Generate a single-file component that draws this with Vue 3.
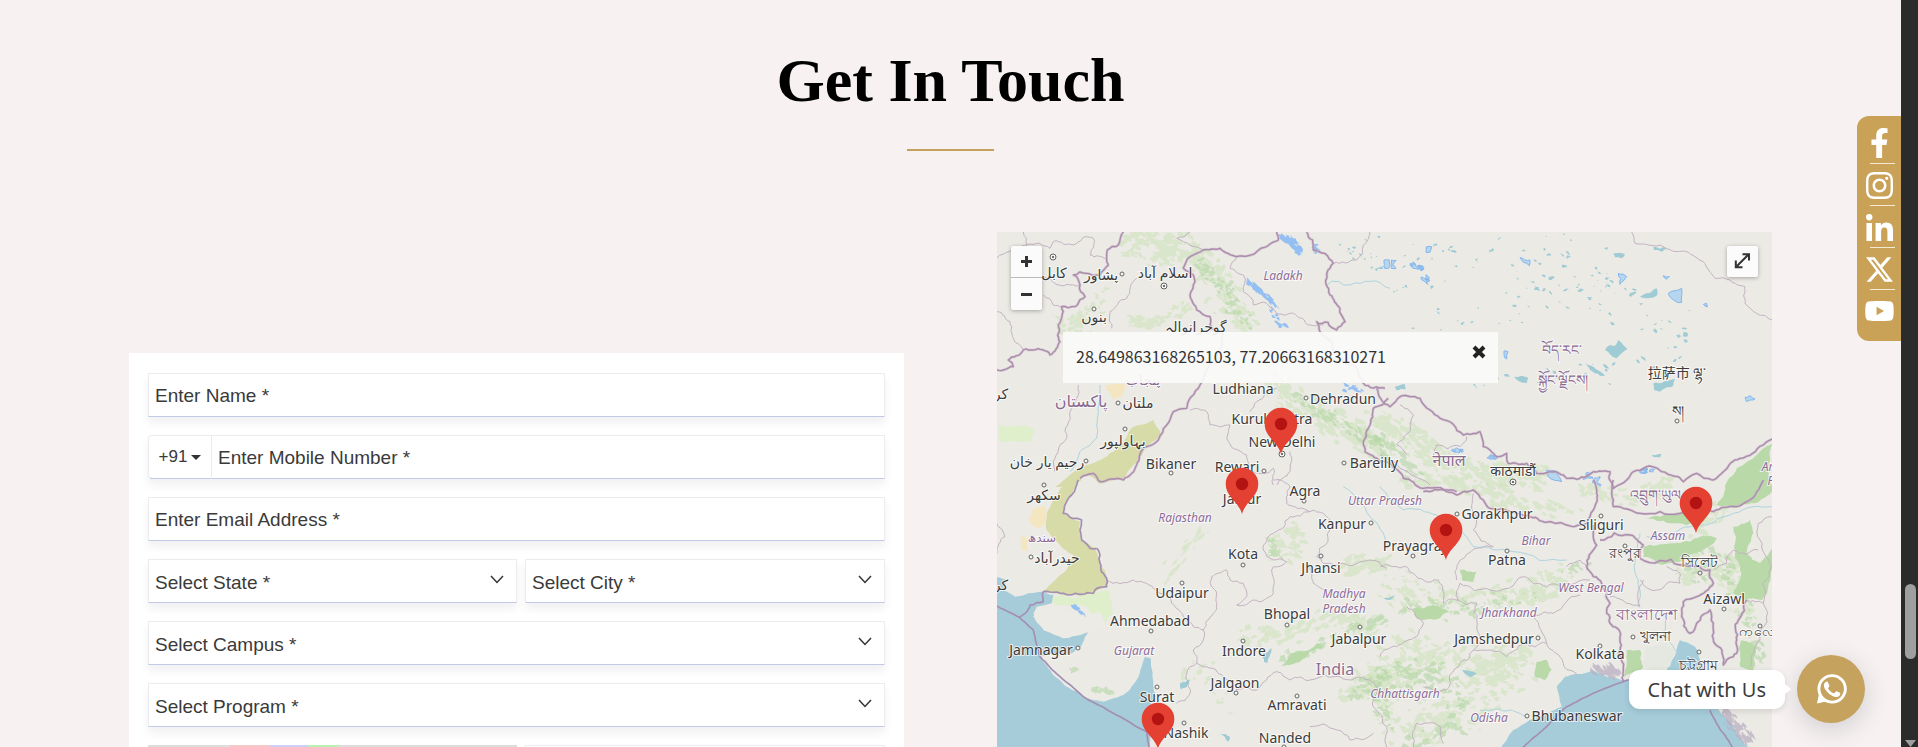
<script setup>
import { ref } from 'vue'

const selects = [
  { id: 'state', label: 'Select State *', half: true },
  { id: 'city', label: 'Select City *', half: true },
  { id: 'campus', label: 'Select Campus *' },
  { id: 'program', label: 'Select Program *' },
]

const socials = [
  { name: 'Facebook', box: '0 0 320 512', w: 19, h: 30, d: 'M279.14 288l14.22-92.66h-88.91v-60.13c0-25.35 12.42-50.06 52.24-50.06h40.42V6.26S260.43 0 225.36 0c-73.22 0-121.08 44.38-121.08 124.72v70.62H22.89V288h81.39v224h100.17V288z' },
  { name: 'Instagram', box: '0 32 448 448', w: 27, h: 27, d: 'M224.1 141c-63.6 0-114.9 51.3-114.9 114.9s51.3 114.9 114.9 114.9S339 319.5 339 255.9 287.7 141 224.1 141zm0 189.6c-41.1 0-74.7-33.5-74.7-74.7s33.5-74.7 74.7-74.7 74.7 33.5 74.7 74.7-33.6 74.7-74.7 74.7zm146.4-194.3c0 14.9-12 26.8-26.8 26.8-14.9 0-26.8-12-26.8-26.8s12-26.8 26.8-26.8 26.8 12 26.8 26.8zm76.1 27.2c-1.7-35.9-9.9-67.7-36.2-93.9-26.2-26.2-58-34.4-93.9-36.2-37-2.1-147.9-2.1-184.9 0-35.8 1.7-67.6 9.9-93.9 36.1s-34.4 58-36.2 93.9c-2.1 37-2.1 147.9 0 184.9 1.7 35.9 9.9 67.7 36.2 93.9s58 34.4 93.9 36.2c37 2.1 147.9 2.1 184.9 0 35.9-1.7 67.7-9.9 93.9-36.2 26.2-26.2 34.4-58 36.2-93.9 2.1-37 2.1-147.8 0-184.8zM398.8 388c-7.8 19.6-22.9 34.7-42.6 42.6-29.5 11.7-99.5 9-132.1 9s-102.7 2.6-132.1-9c-19.6-7.8-34.7-22.9-42.6-42.6-11.7-29.5-9-99.5-9-132.1s-2.6-102.7 9-132.1c7.8-19.6 22.9-34.7 42.6-42.6 29.5-11.7 99.5-9 132.1-9s102.7-2.6 132.1 9c19.6 7.8 34.7 22.9 42.6 42.6 11.7 29.5 9 99.5 9 132.1s2.7 102.7-9 132.1z' },
  { name: 'LinkedIn', box: '0 0 448 448', w: 27, h: 27, d: 'M100.28 448H7.4V148.9h92.88zM53.79 108.1C24.09 108.1 0 83.5 0 53.8a53.79 53.79 0 0 1 107.58 0c0 29.7-24.1 54.3-53.79 54.3zM447.9 448h-92.68V302.4c0-34.7-.7-79.2-48.29-79.2-48.29 0-55.69 37.7-55.69 76.7V448h-92.78V148.9h89.08v40.8h1.3c12.4-23.5 42.69-48.3 87.88-48.3 94 0 111.28 61.9 111.28 142.3V448z' },
  { name: 'X', box: '26 48 462 416', w: 27, h: 25, d: 'M389.2 48h70.6L305.6 224.2 487 464H345L233.7 318.6 106.5 464H35.8L200.7 275.5 26.8 48H172.4L272.9 180.9 389.2 48zM364.4 421.8h39.1L151.1 88h-42L364.4 421.8z' },
  { name: 'YouTube', box: '14 64 548 384', w: 29, h: 20, d: 'M549.655 124.083c-6.281-23.65-24.787-42.276-48.284-48.597C458.781 64 288 64 288 64S117.22 64 74.629 75.486c-23.497 6.322-42.003 24.947-48.284 48.597-11.412 42.867-11.412 132.305-11.412 132.305s0 89.438 11.412 132.305c6.281 23.65 24.787 41.5 48.284 47.821C117.22 448 288 448 288 448s170.78 0 213.371-11.486c23.497-6.321 42.003-24.171 48.284-47.821 11.412-42.867 11.412-132.305 11.412-132.305s0-89.438-11.412-132.305zm-317.51 213.508V175.185l142.739 81.205-142.739 81.201z' },
]

/* Terrain is described on a grid of thirds, split in four quadrants. */
const origin = { nw: [-21, -21], ne: [1149, -21], sw: [-21, 744], se: [1149, 744] }

let seed = 7
function rnd() {
  seed = (seed * 16807) % 2147483647
  return seed / 2147483647
}
function parse(q, s) {
  return s.split(' ').map((p) => {
    const [x, y] = p.split(',').map(Number)
    return [x + origin[q][0], y + origin[q][1]]
  })
}
/* Splits every leg of a line and pushes the new points sideways. */
function rough(pts, amp, closed) {
  let line = closed ? [...pts, pts[0]] : pts
  for (let k = 0; k < 3; k++) {
    const next = [line[0]]
    for (let i = 1; i < line.length; i++) {
      const [ax, ay] = line[i - 1]
      const [bx, by] = line[i]
      const len = Math.hypot(bx - ax, by - ay)
      if (len > 12) {
        const off = (rnd() - 0.5) * len * amp
        next.push([(ax + bx) / 2 - ((by - ay) / len) * off, (ay + by) / 2 + ((bx - ax) / len) * off])
      }
      next.push(line[i])
    }
    line = next
  }
  return 'M' + line.map(([x, y]) => x.toFixed(0) + ' ' + y.toFixed(0)).join('L') + (closed ? 'Z' : '')
}
const line = (q, s, amp = 0.35) => rough(parse(q, s), amp, false)
const area = (q, s, amp = 0.25) => rough(parse(q, s), amp, true)

/* Small irregular patches strewn along a line; `slant` null picks a random lean. */
function scatter(q, s, spread, n, size, slant = null) {
  const pts = parse(q, s)
  let d = ''
  for (let i = 0; i < n; i++) {
    const leg = Math.floor(rnd() * Math.max(1, pts.length - 1))
    const a = pts[leg]
    const b = pts[Math.min(leg + 1, pts.length - 1)]
    const t = rnd()
    const cx = a[0] + (b[0] - a[0]) * t + (rnd() + rnd() - 1) * spread
    const cy = a[1] + (b[1] - a[1]) * t + (rnd() + rnd() - 1) * spread
    const r = size * (0.3 + rnd())
    const lean = slant === null ? rnd() * 1.2 - 0.5 : slant
    const pt = []
    for (let k = 0; k < 10; k++) {
      const ang = (k / 10) * Math.PI * 2
      const rr = r * (0.3 + rnd() * 0.9)
      const x = Math.cos(ang) * rr * 1.2
      pt.push((cx + x).toFixed(0) + ' ' + (cy + Math.sin(ang) * rr * 0.8 + x * lean).toFixed(0))
    }
    d += 'M' + pt.join('L') + 'Z'
  }
  return d
}

const sea = [
  area('sw', '0,290 50,300 40,330 75,350 155,335 190,345 185,370 140,380 130,410 160,450 220,475 295,455 272,500 245,520 190,520 150,530 175,565 230,620 290,655 340,665 400,645 440,600 455,560 465,530 482,535 488,580 495,640 480,680 475,740 500,900 -60,900 -60,290', 0.12),
  area('se', '585,582 640,572 730,600 790,600 860,570 900,480 945,500 970,560 990,620 1010,680 1060,740 1110,810 1110,900 360,900 360,810 400,750 500,700 545,680 530,620 555,590', 0.12),
]
const desert = [
  area('nw', '430,605 490,585 515,630 460,680 430,720 400,760 330,770 290,745 250,785 195,785 290,720 370,680', 0.15),
  area('sw', '230,-5 265,5 225,70 222,100 270,125 275,180 315,205 330,250 352,295 350,322 310,335 240,345 160,333 230,270 250,225 205,190 170,150 170,100 190,60', 0.12),
  area('sw', '315,0 370,0 330,12', 0.1),
]
const sand = [
  area('nw', '345,480 405,478 395,515 370,525'),
  area('sw', '130,85 165,80 165,130 140,145 118,120'),
  area('sw', '90,160 110,175 115,215 95,210'),
]
const marsh = [
  area('sw', '180,350 260,355 355,330 370,400 340,445 310,420 290,380 200,375'),
  area('nw', '25,600 130,610 120,650 25,650'),
]
const forest = [
  area('ne', '1180,650 1130,690 1070,730 1035,785 1010,840 1060,850 1120,835 1180,790'),
  area('se', '790,200 870,190 930,185 960,170 1010,175 960,215 900,245 830,250 790,230'),
  area('se', '1060,140 1110,120 1120,160 1100,220 1140,250 1180,190 1180,260 1145,360 1095,360 1060,340 1080,260'),
  area('se', '1085,480 1130,500 1120,570 1080,560'),
  area('se', '790,115 840,110 980,100 970,125 870,130'),
  area('se', '740,510 780,510 790,560 730,590'),
  area('se', '100,385 160,375 205,395 180,415 110,415'),
  area('se', '470,545 500,540 515,570 495,600 465,590'),
  area('se', '240,270 290,275 280,305 245,300'),
  area('sw', '905,520 980,490 1000,500 930,545 880,555'),
]
const paleWood = [
  scatter('nw', '400,40 480,80 560,60 640,110 700,190 770,300', 60, 190, 12),
  scatter('nw', '420,280 450,295 520,290 600,240', 20, 60, 10, -0.2),
  scatter('nw', '210,290 280,300 330,200', 40, 60, 9),
  scatter('nw', '850,480 960,560 1080,610 1200,680', 50, 190, 13, 0.5),
  scatter('ne', '-30,590 80,630 180,700 320,740 500,770', 50, 200, 13, 0.4),
  scatter('se', '60,0 240,10 400,55 600,100', 35, 110, 12, 0.3),
  scatter('sw', '1050,270 1190,240', 30, 50, 13, -0.3),
  scatter('sw', '760,480 900,450 1050,420 1180,440', 40, 110, 12, -0.4),
  scatter('sw', '1080,640 1190,580 1180,760', 50, 110, 12),
  scatter('se', '20,320 250,380 450,340 560,290', 60, 160, 12),
  scatter('se', '20,580 130,520 300,560 430,530 250,700 80,740', 80, 320, 13),
  scatter('se', '1010,60 900,300 1060,260 1100,420', 50, 120, 13),
  scatter('sw', '640,150 600,200 520,290', 25, 30, 8, -1),
  scatter('sw', '860,180 860,230 930,200 900,140', 30, 60, 11),
  scatter('sw', '560,600 650,560 720,700', 40, 24, 9),
  scatter('se', '870,10 760,60 600,30', 35, 60, 11),
]
const deepWood = [
  scatter('nw', '610,100 690,170 770,290', 30, 90, 8),
  scatter('nw', '900,510 1060,600 1200,680', 22, 90, 9, 0.5),
  scatter('ne', '-10,640 60,690 110,760', 20, 45, 9, 0.5),
  scatter('sw', '870,540 960,510 1100,440 1180,410', 20, 60, 10, -0.5),
  scatter('sw', '1100,650 1170,560 1190,740', 30, 50, 10),
  scatter('sw', '850,190 860,230', 16, 14, 12),
  scatter('se', '20,600 160,560 240,720 100,780', 60, 100, 11),
  scatter('se', '50,390 250,385 480,340', 40, 55, 10),
  scatter('se', '560,280 620,250', 22, 16, 9),
  scatter('se', '930,310 1000,200 1120,420 1130,560', 40, 50, 12),
  scatter('sw', '300,630 360,630', 8, 14, 11),
  scatter('sw', '240,565 265,570', 5, 6, 9),
]
const lakes = [
  scatter('ne', '-40,60 300,100 700,60', 70, 34, 6),
  scatter('ne', '40,200 400,160 700,160', 80, 26, 5),
  scatter('ne', '100,280 400,260 800,230', 70, 24, 5),
  scatter('ne', '500,180 700,200 930,360', 70, 34, 7),
  scatter('ne', '300,480 500,430 700,460 900,380', 50, 24, 6),
  scatter('nw', '1060,60 1180,130', 40, 14, 6),
  area('ne', '675,375 690,360 705,362 715,345 730,360 742,372 725,385 710,400 690,388'),
  area('ne', '820,475 885,462 880,482 855,490 840,500 822,495'),
  area('ne', '402,455 425,452 445,458 440,475 415,468'),
  area('ne', '612,412 640,425 675,452 660,452 630,435'),
  area('ne', '780,215 800,205 830,190 832,210 800,220'),
  area('ne', '700,85 735,88 725,100 705,97'),
  area('ne', '820,65 860,68 845,80 822,75'),
  area('ne', '45,485 75,478 78,492 50,496'),
  area('ne', '815,690 845,688 840,697 820,696'),
  area('sw', '820,520 845,505 840,525 832,550 822,545'),
  area('sw', '570,610 600,598 590,622 572,628'),
  area('sw', '690,762 720,770 715,785'),
  area('se', '245,570 290,580 270,592'),
  area('se', '10,355 45,345 30,360'),
]
const brightLakes = [
  scatter('nw', '870,30 910,50 935,85', 14, 24, 12, 0.7),
  scatter('nw', '770,165 800,190 850,235', 10, 26, 11, 0.9),
  scatter('nw', '835,240 860,280 890,310', 14, 12, 8, 0.5),
  scatter('nw', '960,45 985,80', 14, 6, 7),
  scatter('nw', '1060,485 1120,500', 14, 10, 7),
  scatter('sw', '250,380 280,400', 8, 8, 10, 0.9),
]
const lakeRings = [
  scatter('ne', '80,105 120,120 145,170', 10, 9, 10, 0.5),
  area('ne', '12,105 28,105 26,130 14,130'),
  area('ne', '34,105 48,106 38,120 48,130 34,130'),
  area('ne', '715,145 740,155 720,178'),
  area('ne', '865,205 905,190 905,232 888,230'),
  area('ne', '420,98 450,105 448,122 430,112'),
  area('ne', '140,65 155,65 150,82 138,82'),
  area('ne', '850,152 868,155 858,163'),
  area('ne', '970,238 980,235 982,246'),
  area('ne', '372,378 384,380 380,402 374,398'),
  area('ne', '1095,518 1110,512 1125,522 1100,530'),
  area('ne', '500,735 530,740 545,770 505,755'),
  scatter('ne', '215,680 250,676', 4, 4, 9, 0),
  scatter('ne', '320,690 350,700', 5, 4, 9),
  scatter('ne', '790,735 830,742', 5, 6, 8),
  scatter('ne', '620,750 660,775', 5, 5, 9),
]
const rivers = [
  line('nw', '330,480 325,560 320,640 270,680 240,740', 0.15),
  line('nw', '1200,190 1080,180 1010,180'),
  line('se', '780,160 765,240 775,300 775,380', 0.2),
  line('se', '1175,80 1060,100 980,135 880,160 800,170', 0.2),
  line('se', '0,20 70,90 170,105 280,200 400,215 560,240', 0.2),
  line('se', '850,400 850,460 880,500 890,560', 0.3),
  line('se', '440,710 390,690 300,690', 0.2),
  line('sw', '1060,20 1140,110 1190,190', 0.15),
]
const borders = [
  line('nw', '400,21 385,60 352,75 355,120 330,150 290,145 250,150 270,180 285,215 262,240 215,245 205,300 210,350 180,390 130,375 100,375 55,405 70,425 21,435'),
  line('nw', '860,21 865,45 800,80 740,95 690,70 640,75 600,95 580,130 610,150 615,170 600,210 620,255 660,275 660,300 700,330 680,400 630,480 600,520 590,550 550,560 530,600 500,650 460,670 440,720 400,765 330,770 310,745 270,760', 0.2),
  line('nw', '950,21 970,75 1030,115 1010,160 1020,210 1050,250 1065,290 1040,315 980,290 990,320 1050,400 1120,475 1185,490'),
  line('ne', '-10,490 30,545 60,515 120,520 150,555 180,580 250,630 300,620 310,665 350,695 380,685 385,715 440,715 470,745 510,740 560,760 620,755 640,740 690,740 700,790 740,765 760,740 800,725 860,745 910,770 950,745 1000,765 1030,740 1080,700 1150,660 1185,640', 0.25),
  line('nw', '1195,520 1150,550 1140,600 1120,650 1125,680 1170,710 1200,715 1240,760 1300,790 1400,800', 0.25),
  line('se', '130,35 200,35 230,45 280,30 310,60 330,85 400,95 450,110 510,125 560,135 620,130 640,90 650,40 640,0', 0.25),
  line('se', '700,0 700,80 780,100 900,100 1000,95 1070,80 1110,60 1140,20 1150,0', 0.2),
  line('se', '640,135 640,165 650,195 620,260 640,290 680,340 690,370 680,400 690,430 720,470 715,520 730,590'),
  line('se', '660,180 750,165 790,195 780,235 900,255 990,270 1000,310 950,350 910,365 905,410 930,460 950,430 990,390 1000,430 1015,500 1030,555 1060,530 1070,480 1075,420 1100,360'),
]
const coastLines = [
  line('sw', '320,205 330,250 350,295 350,320 320,325 310,340 240,345 160,335 160,365 120,375 105,400 88,412', 0.25),
  line('sw', '265,0 245,45 225,75 220,100 275,120 275,180 300,205 320,205', 0.2),
  line('sw', '21,378 88,412 130,450 150,530 210,590 280,650 370,700 440,740 470,755 478,810', 0.04),
  line('se', '760,595 730,605 640,640 560,680 500,740 420,810', 0.04),
  line('se', '725,590 730,605', 0.04),
  line('se', '990,690 1010,730 1050,790 1060,810', 0.08),
]
const stateLines = [
  line('nw', '21,100 60,80 110,60 100,21'),
  line('nw', '110,60 180,70 190,50 250,60 310,40 300,90 350,100'),
  line('nw', '21,260 60,290 70,340 100,375'),
  line('nw', '160,210 190,240 215,245'),
  line('nw', '150,140 180,160 240,180 270,180'),
  line('nw', '740,95 720,130 760,150 790,240 830,235 860,265 910,265 960,300 1000,300'),
  line('nw', '1030,115 1100,105 1120,60 1140,21'),
  line('nw', '600,21 560,40 640,75'),
  line('nw', '365,310 360,260 410,220 440,160'),
  line('nw', '600,555 650,560 660,600 720,600 710,640 770,690 790,740 850,730 850,780'),
  line('nw', '265,480 240,560 230,640 195,700 195,740'),
  line('nw', '780,560 800,530 860,490'),
  line('nw', '900,680 900,740 860,780'),
  line('ne', '755,21 765,55 840,60 920,80 970,110 1005,160 1050,165 1095,185 1095,235 1130,265 1180,285', 0.2),
  line('ne', '60,540 100,570 90,620 50,660 80,690'),
  line('ne', '160,690 170,660 240,665 260,635'),
  line('ne', '0,690 60,730 150,780', 0.2),
  line('sw', '350,300 430,300 490,325 545,370 580,410 610,440 640,450 640,480 610,510 620,550 590,580 600,640 560,670'),
  line('sw', '640,450 670,400 680,340 665,290 710,270 720,300 760,310 770,350 740,375 790,360 850,340 850,260 890,245'),
  line('sw', '890,245 820,210 850,160 900,110 960,95 1010,110 1030,140 1010,190 980,230 1000,250 1060,250 1140,240 1190,265'),
  line('sw', '960,260 970,310 1010,340'),
  line('sw', '620,550 650,560 700,590 740,630 800,630 860,575 900,600 960,600 1050,590 1140,600 1160,620 1150,680 1190,740 1190,801'),
  line('sw', '850,0 900,20 890,70 960,95'),
  line('sw', '21,130 45,170 21,220'),
  line('sw', '960,740 1040,750 1080,780 1150,760'),
  line('se', '230,300 235,250 290,205 340,200 280,150 290,110 280,40'),
  line('se', '0,260 80,260 130,300 175,300 190,370 235,360 240,310 330,330 430,290 500,320 560,310 630,300'),
  line('se', '80,380 130,430 110,470 50,500 0,530'),
  line('se', '290,420 280,510 240,550 200,630 130,620'),
  line('se', '290,420 290,370 230,360'),
  line('se', '600,345 520,400 460,410 500,490 550,550 590,580'),
  line('se', '280,510 380,530 430,490 500,490'),
  line('se', '100,801 110,730 180,740 190,790'),
  line('se', '780,300 830,330 900,310 900,280 860,260'),
  line('se', '690,350 740,370 780,380 790,300'),
  line('se', '1100,360 1150,370 1175,260 1140,180 1135,130 1175,110'),
  line('se', '1150,370 1140,480 1110,560'),
  line('se', '1000,270 1060,210 1135,210'),
  line('se', '560,260 600,240 620,270'),
]
const delta = [
  scatter('se', '650,570 715,575', 16, 50, 9, 1),
  scatter('se', '1030,690 1110,790', 22, 70, 9, 1),
]
const deltaIsland = area('se', '800,500 860,490 885,520 870,560 830,575 790,560')
const kutch = area('sw', '130,400 150,380 200,387 250,388 280,405 330,395 350,440 290,458 220,475 160,450', 0.12)

/* [text, x, baseline, kind] in map pixels */
const labels = [
  ['کابل', 57, 46], ['پشاور', 104, 48], ['اسلام آباد', 168, 46], ['بنوں', 97, 90], ['گوجرانوالہ', 199, 100],
  ['پنجاب', 146, 153, 'country small'], ['کر', 4, 167], ['پاکستان', 84, 175, 'country'], ['ملتان', 141, 176],
  ['بہاولپور', 126, 214], ['رحیم یار خان', 50, 235], ['سکھر', 47, 268], ['سندھ', 45, 310, 'region upright'],
  ['حیدرآباد', 60, 331], ['کر', 4, 358],
  ['Ladakh', 286, 48, 'region'], ['Ludhiana', 246, 162], ['Dehradun', 346, 172], ['Kurukshetra', 275, 192],
  ['New Delhi', 285, 215], ['Bikaner', 174, 237], ['Rewari', 240, 240], ['Bareilly', 377, 236],
  ['བོད་རང་', 565, 123, 'country small'], ['སྐྱོང་ལྗོངས།', 566, 153, 'country small'],
  ['拉萨市 ལྷ་', 680, 146], ['ས།', 681, 184],
  ['नेपाल', 452, 234, 'country'], ['काठमाडौं', 516, 244],
  ['Arunachal', 792, 239, 'region'], ['Pradesh', 792, 253, 'region'],
  ['Jaipur', 245, 272], ['Agra', 308, 264], ['Rajasthan', 188, 290, 'region'], ['Uttar Pradesh', 388, 273, 'region'],
  ['Kanpur', 345, 297], ['Kota', 246, 327], ['Prayagraj', 417, 319], ['Jhansi', 324, 341], ['Udaipur', 185, 366],
  ['Madhya', 347, 366, 'region'], ['Pradesh', 347, 381, 'region'], ['Bhopal', 290, 387], ['Ahmedabad', 153, 394],
  ['Jamnagar', 44, 423], ['Gujarat', 137, 423, 'region'], ['Indore', 247, 424], ['Jabalpur', 362, 412],
  ['India', 338, 443, 'country'], ['Jalgaon', 238, 456], ['Surat', 160, 470], ['Amravati', 300, 478],
  ['Chhattisgarh', 408, 466, 'region'], ['Nashik', 189, 506], ['Nanded', 288, 511],
  ['Gorakhpur', 500, 287], ['Bihar', 539, 313, 'region'], ['Patna', 510, 333], ['Siliguri', 604, 298],
  ['འབྲུག་ཡུལ', 658, 268, 'country small'], ['Assam', 671, 308, 'region'], ['রংপুর', 628, 326], ['সিলেট', 702, 335],
  ['West Bengal', 594, 360, 'region'], ['Aizawl', 727, 372], ['Jharkhand', 512, 385, 'region'],
  ['বাংলাদেশ', 649, 388, 'country'], ['Jamshedpur', 497, 412], ['খুলনা', 658, 409], ['Kolkata', 603, 427],
  ['ကလေး', 762, 404], ['চট্টগ্রাম', 701, 438], ['Bhubaneswar', 580, 489], ['Odisha', 492, 490, 'region'],
]
const towns = [
  [125, 42], [97, 77], [121, 171], [309, 166], [128, 197], [89, 229], [174, 241], [267, 239], [347, 231], [680, 189],
  [47, 253], [34, 325], [307, 269], [374, 291], [246, 333], [416, 324], [324, 324], [185, 351], [290, 393], [154, 399],
  [81, 416], [246, 409], [363, 395], [239, 461], [160, 455], [300, 464], [187, 491], [287, 515], [460, 282], [510, 319],
  [604, 284], [628, 314], [703, 341], [727, 377], [541, 406], [636, 405], [603, 414], [763, 394], [702, 420], [530, 484],
]
const capitals = [[56, 25], [167, 54], [285, 222], [516, 250]]
const pins = [[284, 222], [245, 282], [161, 517], [449, 328], [699, 301]]

const showPopup = ref(true)
</script>

<template>
  <div class="shell">
    <main class="page">
      <h1 class="title">Get In Touch</h1>
      <div class="rule"></div>

      <div class="columns">
        <form class="card" @submit.prevent>
          <div class="row">
            <input class="field" type="text" placeholder="Enter Name *" aria-label="Name" />
          </div>
          <div class="row phone">
            <button type="button" class="code" aria-label="Country code +91">+91<span class="caret"></span></button>
            <input class="field" type="tel" placeholder="Enter Mobile Number *" aria-label="Mobile number" />
          </div>
          <div class="row">
            <input class="field" type="email" placeholder="Enter Email Address *" aria-label="Email address" />
          </div>
          <div v-for="s in selects" :key="s.id" class="row" :class="{ half: s.half }">
            <select :id="s.id" class="field" :aria-label="s.label"><option>{{ s.label }}</option></select>
            <svg class="chevron" viewBox="0 0 14 9" aria-hidden="true"><path d="M1 1l6 6.500L13 1" /></svg>
          </div>
          <div class="captcha" aria-hidden="true"><i></i></div>
          <div class="row half">
            <input class="field" type="text" aria-label="Captcha" />
          </div>
        </form>

        <section class="map" aria-label="Campus map">
          <svg class="tiles" viewBox="0 0 775 515" preserveAspectRatio="xMinYMin slice">
            <rect width="775" height="515" fill="#ebeae5" />
            <g transform="scale(0.33333)">
              <path v-for="d in marsh" :key="d" :d="d" fill="#dfefcb" />
              <path v-for="d in paleWood" :key="d" :d="d" fill="#cfe3bd" opacity="0.65" />
              <path v-for="d in deepWood" :key="d" :d="d" fill="#b2d6a3" opacity="0.6" />
              <path v-for="d in forest" :key="d" :d="d" fill="#b9d9a9" />
              <path v-for="d in desert" :key="d" :d="d" fill="#d7dba7" />
              <path v-for="d in sand" :key="d" :d="d" fill="#f3e6c0" />
              <path v-for="d in sea" :key="d" :d="d" fill="#a6ccd9" />
              <path :d="kutch" fill="#ecebe5" />
              <path :d="deltaIsland" fill="#e4e8e0" />
              <path v-for="d in delta" :key="d" :d="d" fill="#b9aec0" opacity="0.75" />
              <path v-for="d in lakes" :key="d" :d="d" fill="#9fcbd5" />
              <path v-for="d in brightLakes" :key="d" :d="d" fill="#94bff3" />
              <g fill="#b5d6ee" stroke="#84b6ee" stroke-width="3"><path v-for="d in lakeRings" :key="d" :d="d" /></g>
              <g class="ln" stroke="#acd3de" stroke-width="3"><path v-for="d in rivers" :key="d" :d="d" /></g>
              <g class="ln" stroke="#c3b3c2" stroke-width="3"><path v-for="d in stateLines" :key="d" :d="d" /></g>
              <g class="ln" stroke="#c9b3ca" stroke-width="8" opacity="0.6"><path v-for="d in borders" :key="d" :d="d" /></g>
              <g class="ln" stroke="#ab8cab" stroke-width="4"><path v-for="d in borders" :key="d" :d="d" /></g>
              <g class="ln" stroke="#a48fb3" stroke-width="5"><path v-for="d in coastLines" :key="d" :d="d" /></g>
            </g>
            <circle v-for="(t, i) in towns" :key="'t' + i" class="town" :cx="t[0]" :cy="t[1]" r="2" />
            <g v-for="(t, i) in capitals" :key="'c' + i">
              <circle class="town" :cx="t[0]" :cy="t[1]" r="3" />
              <circle :cx="t[0]" :cy="t[1]" r="1" fill="#444" />
            </g>
            <text v-for="(l, i) in labels" :key="'l' + i" class="lbl" :class="l[3]" :x="l[1]" :y="l[2]">{{ l[0] }}</text>
            <g v-for="(p, i) in pins" :key="'p' + i" :transform="`translate(${p[0]} ${p[1]})`">
              <path d="M0 0C-3-12-16.300-17-16.300-30a16.300 16.300 0 0 1 32.600 0C16.300-17 3-12 0 0Z" fill="#e44133" />
              <circle cy="-30" r="6.200" fill="#b31412" />
            </g>
          </svg>

          <div class="zoom">
            <button type="button" aria-label="Zoom in"><svg viewBox="0 0 31 31"><path d="M15.500 10v11M10 15.500h11" /></svg></button>
            <button type="button" aria-label="Zoom out"><svg viewBox="0 0 31 31"><path d="M10 15.500h11" /></svg></button>
          </div>
          <button type="button" class="expand" aria-label="Full screen">
            <svg viewBox="0 0 31 31"><path d="M10 20L21 9M15.500 8.200H22V14.500M8.800 14.500V21.200H15.500" /></svg>
          </button>
          <div v-if="showPopup" class="popup">
            <span>28.649863168265103, 77.20663168310271</span>
            <button type="button" aria-label="Close" @click="showPopup = false">
              <svg viewBox="0 0 14 14"><path d="M2 2l10 10M12 2L2 12" /></svg>
            </button>
          </div>
        </section>
      </div>

      <nav class="social" aria-label="Social links">
        <a v-for="s in socials" :key="s.name" href="#" :aria-label="s.name">
          <svg :viewBox="s.box" :width="s.w" :height="s.h"><path :d="s.d" /></svg>
        </a>
      </nav>

      <div class="chat">
        <span class="bubble">Chat with Us</span>
        <a class="whatsapp" href="#" aria-label="WhatsApp">
          <svg viewBox="0 0 96 96">
            <circle cx="50" cy="46" r="41" fill="none" stroke="#fff" stroke-width="9" />
            <path d="M3 91l7-32 12 19 13 6z" fill="#fff" />
            <path transform="translate(-0.500 -10) scale(0.225)" fill="#fff" d="M325.100 300.500c-5.500-2.800-32.800-16.200-37.900-18-5.100-1.900-8.800-2.800-12.500 2.800-3.700 5.600-14.300 18-17.600 21.800-3.200 3.700-6.500 4.200-12 1.400-32.600-16.300-54-29.100-75.500-66-5.700-9.800 5.700-9.100 16.300-30.300 1.800-3.700.9-6.900-.5-9.700-1.400-2.800-12.500-30.100-17.100-41.200-4.500-10.800-9.100-9.300-12.500-9.500-3.200-.2-6.900-.2-10.600-.2-3.700 0-9.700 1.400-14.800 6.900-5.100 5.600-19.400 19-19.400 46.300 0 27.300 19.900 53.700 22.600 57.400 2.800 3.700 39.100 59.700 94.800 83.800 35.200 15.200 49 16.500 66.600 13.900 10.700-1.600 32.800-13.400 37.400-26.400 4.600-13 4.600-24.100 3.200-26.400-1.300-2.500-5-3.900-10.500-6.600z" />
          </svg>
        </a>
      </div>
    </main>
    <div class="scrollbar" aria-hidden="true">
      <div class="thumb"></div>
      <svg viewBox="0 0 13 8"><path d="M1 1h11L6.500 8z" /></svg>
    </div>
  </div>
</template>

<style>
body {
  background: #f7f2f1;
}
</style>

<style scoped>
.shell {
  display: flex;
  height: 100vh;
  overflow: hidden;
  font-family: "Liberation Sans", Arial, sans-serif;
  color: #333;
}
.shell *,
.shell *::before,
.shell *::after {
  box-sizing: border-box;
}
.page {
  position: relative;
  flex: 1;
  min-width: 0;
  height: 100%;
  overflow: hidden;
  background: #f7f2f1;
}
.title {
  margin: 46px 0 0;
  font: bold 62px/68px "Liberation Serif", "Times New Roman", serif;
  text-align: center;
  color: #000;
}
.rule {
  width: 87px;
  height: 2px;
  margin: 35px auto 0;
  background: #c49f5d;
}
.columns {
  display: grid;
  grid-template-columns: 1fr 1fr;
  gap: 93px;
  align-items: start;
  margin-top: 81px;
  padding: 0 129px;
}
.card {
  display: grid;
  grid-template-columns: 41fr 40fr;
  gap: 18px 8px;
  margin-top: 121px;
  padding: 20px 19px;
  background: #fff;
}
.row {
  position: relative;
  display: flex;
  grid-column: 1 / -1;
  height: 44px;
  box-shadow: 0 6px 8px rgba(60, 60, 80, 0.07);
}
.row.half {
  grid-column: auto;
}
.field {
  flex: 1;
  min-width: 0;
  height: 44px;
  margin: 0;
  padding: 2px 6px 0;
  border: 1px solid #ececf0;
  border-bottom-color: #c3cae6;
  border-radius: 0;
  background: #fff;
  font: 19px "Liberation Sans", Arial, sans-serif;
  color: #3a3a3a;
  appearance: none;
  outline: none;
}
select.field {
  padding-top: 3px;
}
.field::placeholder {
  color: #3a3a3a;
  opacity: 1;
}
.phone .field {
  border-left: 0;
}
.code {
  display: flex;
  align-items: center;
  justify-content: center;
  gap: 4px;
  width: 64px;
  padding: 0;
  border: 1px solid #ececf0;
  border-bottom-color: #c3cae6;
  border-radius: 4px 0 0 4px;
  background: #fff;
  font: 17px "Liberation Sans", Arial, sans-serif;
  color: #3a3a3a;
}
.caret {
  border: 5px solid transparent;
  border-top-color: #333;
  border-bottom: 0;
}
.chevron {
  position: absolute;
  top: 16px;
  right: 13px;
  width: 14px;
  height: 9px;
  fill: none;
  stroke: #333;
  stroke-width: 1.5;
  pointer-events: none;
}
.captcha {
  height: 44px;
  background: #ddd;
}
.captcha i {
  display: block;
  width: 110px;
  height: 44px;
  margin-left: 82px;
  background: linear-gradient(90deg, #f6c9c6 0 36%, #cfcff5 36% 70%, #b9f0b4 70%);
}

.map {
  position: relative;
}
.tiles {
  display: block;
  width: 100%;
}
.ln {
  fill: none;
  stroke-linejoin: round;
}
.town {
  fill: #f5f5f2;
  stroke: #666;
  stroke-width: 1;
}
.lbl {
  font: 14px "Noto Sans", "DejaVu Sans", "Noto Sans CJK SC", sans-serif;
  text-anchor: middle;
  fill: #3c3c3c;
  stroke: rgba(255, 255, 255, 0.7);
  stroke-width: 2px;
  paint-order: stroke;
}
.lbl.region {
  font-size: 12px;
  font-style: italic;
  fill: #8d6c99;
}
.lbl.country {
  font-size: 16px;
  fill: #8a6a92;
}
.lbl.small {
  font-size: 14px;
}
.lbl.upright {
  font-style: normal;
}
.zoom,
.expand {
  position: absolute;
  top: 14px;
  border-radius: 2px;
  background: #fbfbfb;
  box-shadow: 0 1px 4px rgba(0, 0, 0, 0.3);
}
.zoom {
  left: 14px;
  width: 31px;
}
.zoom button {
  display: block;
  width: 31px;
  height: 31px;
  padding: 0;
  border: 0;
  background: none;
}
.zoom button + button {
  height: 33px;
  border-top: 1px solid #bbb;
}
.zoom svg,
.expand svg {
  display: block;
  width: 31px;
  height: 31px;
  fill: none;
  stroke: #333;
  stroke-width: 3;
}
.expand {
  right: 14px;
  width: 31px;
  height: 31px;
  padding: 0;
  border: 0;
}
.expand svg {
  stroke-width: 2;
}
.popup {
  position: absolute;
  top: 100px;
  left: 66px;
  display: flex;
  justify-content: space-between;
  width: 435px;
  height: 51px;
  padding: 0 12px 0 13px;
  background: rgba(250, 250, 250, 0.92);
  font: 16px/48px "Noto Sans CJK SC", "Noto Sans", sans-serif;
  color: #333;
}
.popup button {
  width: 14px;
  height: 14px;
  margin-top: 13px;
  padding: 0;
  border: 0;
  background: none;
}
.popup svg {
  display: block;
  fill: none;
  stroke: #222;
  stroke-width: 4;
}

.social {
  position: absolute;
  top: 116px;
  right: 0;
  width: 44px;
  padding: 6px 0 9px;
  border-radius: 12px 0 0 12px;
  background: #c9a257;
}
.social a {
  position: relative;
  display: flex;
  align-items: center;
  justify-content: center;
  height: 42px;
}
.social a:not(:last-child)::after {
  content: "";
  position: absolute;
  right: 6px;
  bottom: 0;
  width: 25px;
  height: 1px;
  background: #f5ead6;
}
.social svg {
  fill: #fff;
}
.chat {
  position: absolute;
  right: 36px;
  bottom: 24px;
  display: flex;
  align-items: center;
  gap: 12px;
}
.bubble {
  position: relative;
  padding: 0 19px;
  border-radius: 11px;
  background: #fff;
  box-shadow: 0 2px 6px rgba(0, 0, 0, 0.12);
  font: 20px/39px "Noto Sans", "Open Sans", sans-serif;
  color: #3c3c3c;
}
.bubble::after {
  content: "";
  position: absolute;
  top: 14px;
  right: -6px;
  border: 5px solid transparent;
  border-left: 6px solid #fff;
  border-right: 0;
}
.whatsapp {
  display: flex;
  align-items: center;
  justify-content: center;
  width: 68px;
  height: 68px;
  border-radius: 50%;
  background: #c5a25d;
  box-shadow: 0 6px 24px rgba(60, 60, 80, 0.2);
}
.whatsapp svg {
  width: 31px;
  height: 31px;
}
.scrollbar {
  position: relative;
  flex: none;
  width: 17px;
  background: #2b2b2b;
}
.thumb {
  position: absolute;
  top: 78.2%;
  left: 4px;
  width: 11px;
  height: 10%;
  border-radius: 6px;
  background: #9f9f9f;
}
.scrollbar svg {
  position: absolute;
  bottom: 0;
  left: 3px;
  width: 13px;
  height: 8px;
  fill: #9f9f9f;
}
</style>
